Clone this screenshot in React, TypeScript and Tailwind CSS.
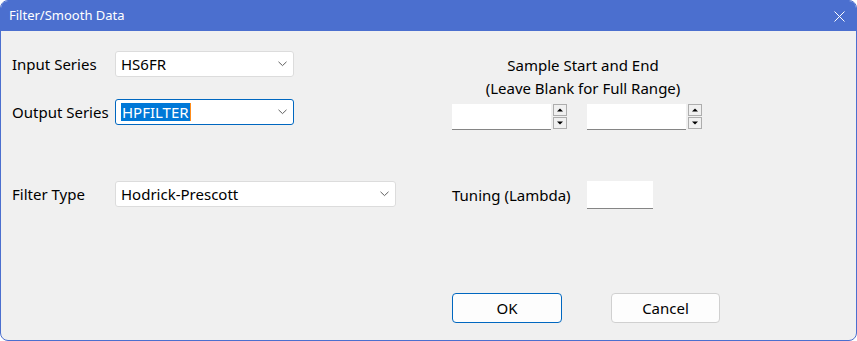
import React from "react";

const font = { fontFamily: '"Noto Sans", "Open Sans", sans-serif' };

function Chevron() {
  return (
    <svg width="9" height="6" viewBox="0 0 9 6" className="shrink-0">
      <path d="M0.5 0.8 L4.5 4.6 L8.5 0.8" fill="none" stroke="#5f5f5f" strokeWidth="1" />
    </svg>
  );
}

function Combo({ width, text, focused }: { width: string; text: string; focused?: boolean }) {
  return (
    <div
      className={`${width} h-[26px] bg-white rounded-[3px] flex items-center justify-between pl-[5px] pr-[6px] ${
        focused ? "border border-[#0067c0]" : "border border-[#dcdcdc]"
      }`}
    >
      {focused ? (
        <span className="flex items-center">
          <span className="bg-[#0078d7] text-white px-[1px] leading-[18px]">{text}</span>
          <span className="w-[1px] h-[18px] bg-[#ff8c1a]" />
        </span>
      ) : (
        <span className="text-black">{text}</span>
      )}
      <Chevron />
    </div>
  );
}

function SpinBtn({ up }: { up?: boolean }) {
  return (
    <div className="w-[14px] h-[12px] bg-[#f0f0f0] border border-[#adadad] flex items-center justify-center">
      <svg width="6" height="4" viewBox="0 0 6 4">
        {up ? <path d="M0 3.5 L3 0.5 L6 3.5 Z" fill="#000" /> : <path d="M0 0.5 L3 3.5 L6 0.5 Z" fill="#000" />}
      </svg>
    </div>
  );
}

function Spinner() {
  return (
    <div className="flex items-start">
      <div className="w-[99px] h-[26px] bg-white border-b border-[#858585]" />
      <div className="ml-[2px] flex flex-col gap-[1px]">
        <SpinBtn up />
        <SpinBtn />
      </div>
    </div>
  );
}

export default function App() {
  return (
    <div className="w-[857px] h-[341px] bg-white" style={font}>
      <div className="w-full h-full flex flex-col rounded-[8px] border border-[#4b6fcf] overflow-hidden bg-[#f0f0f0]">
        <div className="h-[30px] bg-[#4b6fcf] flex items-center justify-between pl-[8px] pr-[11px] shrink-0">
          <span className="text-white text-[13px]">Filter/Smooth Data</span>
          <svg width="11" height="11" viewBox="0 0 11 11">
            <path d="M0.5 0.5 L10.5 10.5 M10.5 0.5 L0.5 10.5" stroke="#fff" strokeWidth="1" />
          </svg>
        </div>
        <div className="flex-1 pl-[11px] pt-[20px] text-[15px] text-black">
          <div className="flex">
            <div className="w-[440px] flex flex-col">
              <div className="flex items-center">
                <span className="w-[103px]">Input Series</span>
                <Combo width="w-[179px]" text="HS6FR" />
              </div>
              <div className="flex items-center mt-[22px]">
                <span className="w-[103px]">Output Series</span>
                <Combo width="w-[179px]" text="HPFILTER" focused />
              </div>
              <div className="flex items-center mt-[56px]">
                <span className="w-[103px]">Filter Type</span>
                <Combo width="w-[281px]" text="Hodrick-Prescott" />
              </div>
            </div>
            <div className="flex flex-col pt-[3px]">
              <div className="w-[262px] text-center leading-[23px]">
                <div>Sample Start and End</div>
                <div>(Leave Blank for Full Range)</div>
              </div>
              <div className="flex mt-[4px] gap-[20px]">
                <Spinner />
                <Spinner />
              </div>
              <div className="flex items-center mt-[51px]">
                <span className="w-[135px]">Tuning (Lambda)</span>
                <div className="w-[66px] h-[28px] bg-white border-b border-[#858585]" />
              </div>
            </div>
          </div>
          <div className="flex ml-[440px] mt-[84px] gap-[49px]">
            <button className="w-[110px] h-[30px] bg-[#fdfdfd] border border-[#0067c0] rounded-[4px] text-[15px]">OK</button>
            <button className="w-[109px] h-[30px] bg-[#fdfdfd] border border-[#d0d0d0] rounded-[4px] text-[15px]">Cancel</button>
          </div>
        </div>
      </div>
    </div>
  );
}
